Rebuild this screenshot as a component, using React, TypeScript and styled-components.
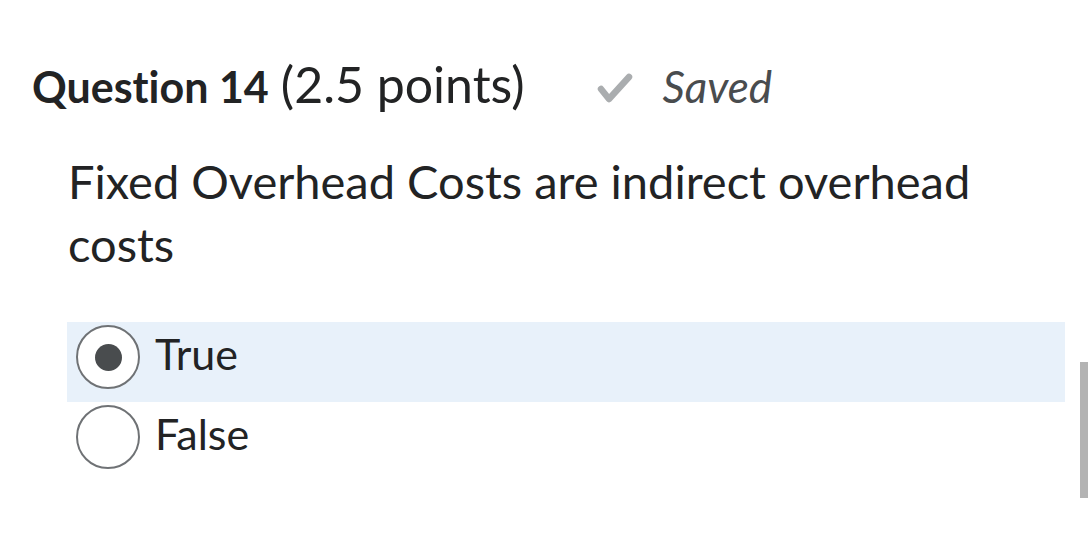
import React from "react";
import styled, { createGlobalStyle } from "styled-components";

const Global = createGlobalStyle`
  html, body { margin: 0; padding: 0; background: #ffffff; }
  body {
    font-family: Lato, "Open Sans", sans-serif;
    color: #202122;
    font-variant-ligatures: none;
    font-feature-settings: "liga" 0;
  }
`;

const Page = styled.div`
  position: relative;
  width: 1088px;
  height: 545px;
  overflow: hidden;
  display: flex;
  flex-direction: column;
`;

const Header = styled.div`
  display: flex;
  align-items: baseline;
  padding: 54px 0 0 32px;
  height: 50px;
`;

const QTitle = styled.span`
  font-weight: 700;
  font-size: 43px;
  color: #222324;
`;

const Points = styled.span`
  font-weight: 400;
  font-size: 50px;
  margin-left: 12px;
  color: #222324;
`;

const SavedWrap = styled.span`
  display: flex;
  align-items: baseline;
  margin-left: 72px;
  gap: 28px;
`;

const SavedText = styled.span`
  font-style: italic;
  font-size: 44px;
  color: #494c4e;
`;

const Check = styled.svg`
  width: 38px;
  height: 32px;
  align-self: center;
  transform: translateY(2px);
`;

const Prompt = styled.div`
  padding: 46px 40px 0 68px;
  font-size: 47px;
  line-height: 63px;
  color: #222324;
`;

const Options = styled.div`
  display: flex;
  flex-direction: column;
  margin-top: 46px;
  padding-left: 67px;
  width: 998px;
`;

const Option = styled.label<{ $selected?: boolean }>`
  box-sizing: border-box;
  display: flex;
  align-items: center;
  height: 80px;
  padding-bottom: 10px;
  background: ${(p) => (p.$selected ? "#e8f1fa" : "transparent")};
  font-size: 43px;
  color: #222324;
`;

const Radio = styled.span<{ $checked?: boolean }>`
  box-sizing: border-box;
  width: 64px;
  height: 64px;
  margin-left: 9px;
  border-radius: 50%;
  border: 2px solid #6f7275;
  background: #fff;
  display: flex;
  align-items: center;
  justify-content: center;
  &::after {
    content: "";
    display: ${(p) => (p.$checked ? "block" : "none")};
    width: 27px;
    height: 27px;
    border-radius: 50%;
    background: #494c4e;
  }
`;

const OptText = styled.span`
  margin-left: 15px;
  margin-bottom: 8px;
`;

const Scrollbar = styled.div`
  position: absolute;
  right: 0;
  top: 362px;
  width: 8px;
  height: 136px;
  background: #b3b3b3;
`;

export default function App() {
  return (
    <>
      <Global />
      <Page>
        <Header>
          <QTitle>Question 14</QTitle>
          <Points>(2.5 points)</Points>
          <SavedWrap>
            <Check viewBox="0 0 38 32">
              <path d="M5 17 L13 27 L33 5" fill="none" stroke="#aaadaf" strokeWidth="6.5" strokeLinecap="round" strokeLinejoin="round" />
            </Check>
            <SavedText>Saved</SavedText>
          </SavedWrap>
        </Header>
        <Prompt>Fixed Overhead Costs are indirect overhead costs</Prompt>
        <Options>
          <Option $selected>
            <Radio $checked />
            <OptText>True</OptText>
          </Option>
          <Option>
            <Radio />
            <OptText>False</OptText>
          </Option>
        </Options>
        <Scrollbar />
      </Page>
    </>
  );
}
